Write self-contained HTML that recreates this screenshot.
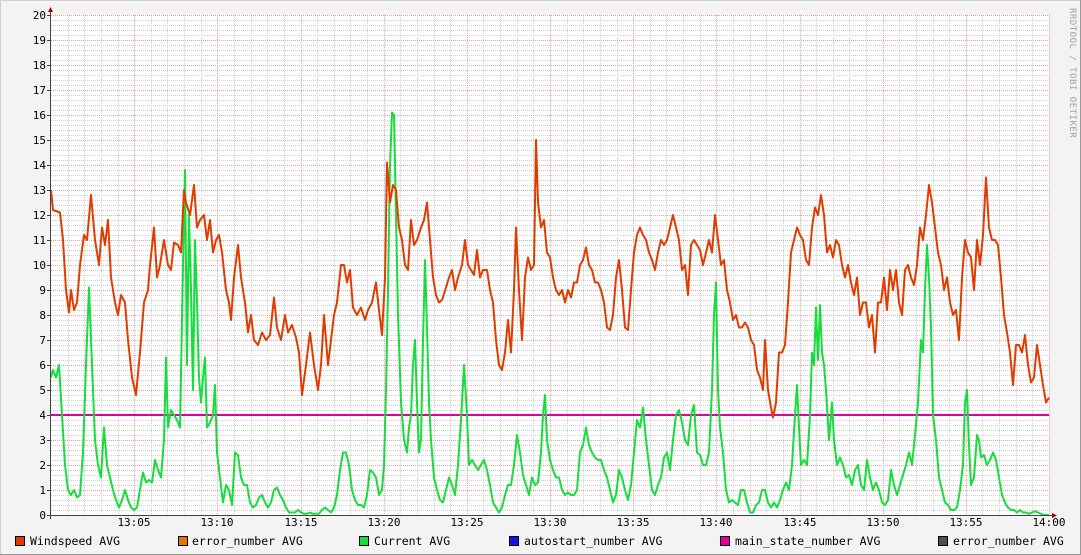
<!DOCTYPE html>
<html><head><meta charset="utf-8"><style>
html,body{margin:0;padding:0;background:#f3f3f3;}
svg{display:block;}
</style></head><body>
<svg id="g" width="1081" height="555" xmlns="http://www.w3.org/2000/svg" font-family="'DejaVu Sans Mono','Liberation Mono',monospace">
<rect x="0" y="0" width="1081" height="555" fill="#f3f3f3"/>
<rect x="0.5" y="0.5" width="1080" height="554" fill="none" stroke="#cfcfcf"/>
<line x1="0" y1="554.5" x2="1081" y2="554.5" stroke="#9a9a9a"/>
<line x1="1080.5" y1="0" x2="1080.5" y2="555" stroke="#9a9a9a"/>
<rect x="51" y="15" width="998" height="500" fill="#ffffff"/>
<g id="grid"></g>
<g id="lab" font-size="11" fill="#000"></g>
<line x1="51" y1="415" x2="1049" y2="415" stroke="#e000a0" stroke-width="2"/>
<polyline id="cur" fill="none" stroke="#16dd3c" stroke-width="2" stroke-linejoin="round"/>
<polyline id="wind" fill="none" stroke="#e03c00" stroke-width="2" stroke-linejoin="round"/>
<line x1="50.5" y1="8" x2="50.5" y2="519" stroke="#404040"/>
<line x1="47" y1="515.5" x2="1055" y2="515.5" stroke="#404040"/>
<polygon points="48,12 53,12 50.5,7" fill="#a00000"/>
<polygon points="1052,513 1052,518 1057,515.5" fill="#a00000"/>
<text x="1070" y="8" font-size="9" fill="#a0a0a0" transform="rotate(90 1070 8)" letter-spacing="0.5">RRDTOOL / TOBI OETIKER</text>
<g font-size="11.5" fill="#000">
<rect x="15.5" y="536.5" width="9" height="9" fill="#e03c00" stroke="#000"/><text x="30" y="545">Windspeed AVG</text>
<rect x="178.5" y="536.5" width="9" height="9" fill="#e07800" stroke="#000"/><text x="192" y="545">error_number AVG</text>
<rect x="359.5" y="536.5" width="9" height="9" fill="#16dd3c" stroke="#000"/><text x="374" y="545">Current AVG</text>
<rect x="509.5" y="536.5" width="9" height="9" fill="#2010e0" stroke="#000"/><text x="524" y="545">autostart_number AVG</text>
<rect x="720.5" y="536.5" width="9" height="9" fill="#e000a0" stroke="#000"/><text x="735" y="545">main_state_number AVG</text>
<rect x="938.5" y="536.5" width="9" height="9" fill="#505050" stroke="#000"/><text x="953" y="545">error_number AVG</text>
</g>
</svg>
<script>
var NS="http://www.w3.org/2000/svg";
function el(t,a,p){var e=document.createElementNS(NS,t);for(var k in a)e.setAttribute(k,a[k]);p.appendChild(e);return e;}
var grid=document.getElementById('grid'),lab=document.getElementById('lab');
for(var i=0;i<=100;i++){var y=515-i*5;if(i%5)el('line',{x1:51,x2:1049,y1:y+.5,y2:y+.5,stroke:'#d0d0d0','stroke-dasharray':'1,1'},grid);}
for(var m=0;m<=60;m++){var x=Math.round(51+m*16.633);if(m%5)el('line',{x1:x+.5,x2:x+.5,y1:15,y2:515,stroke:'#d0d0d0','stroke-dasharray':'1,1'},grid);}
for(var v=0;v<=20;v++){var y=515-v*25;el('line',{x1:51,x2:1049,y1:y+.5,y2:y+.5,stroke:'#f0a0a0','stroke-dasharray':'1,1'},grid);
 el('line',{x1:47,x2:51,y1:y+.5,y2:y+.5,stroke:'#404040'},grid);
 var t=el('text',{x:46,y:y+4,'text-anchor':'end'},lab);t.textContent=v;}
var names=["13:05","13:10","13:15","13:20","13:25","13:30","13:35","13:40","13:45","13:50","13:55","14:00"];
for(var k=1;k<=12;k++){var x=Math.round(51+k*83.17);el('line',{x1:x+.5,x2:x+.5,y1:15,y2:515,stroke:'#f0a0a0','stroke-dasharray':'1,1'},grid);
 var t=el('text',{x:x,y:526,'text-anchor':'middle'},lab);t.textContent=names[k-1];}
var W=[51,13,53,12.2,60,12.1,63,11,66,9,69,8.1,71,9,74,8.2,77,8.5,80,10,84,11.2,87,11,91,12.8,95,11,99,10,102,11.5,105,10.8,108,11.8,111,9.5,115,8.5,118,8,121,8.8,125,8.5,128,7,132,5.5,136,4.8,140,6.5,144,8.5,148,9,150,10,154,11.5,157,9.5,160,10,164,11,168,10,171,9.8,174,10.9,178,10.8,181,10.5,184,13,186,12.5,190,12,194,13.2,197,11.5,200,11.8,204,12,207,11,210,11.8,213,10.5,216,11,219,11.2,222,10.5,226,9,229,8.5,231,7.8,234,9.5,238,10.8,241,9.5,245,8.5,248,7.3,251,8,254,7,258,6.8,262,7.3,266,7,270,7.2,274,8.7,277,7.5,281,7,285,8,288,7.3,292,7.6,296,7.1,299,6.5,302,4.8,306,6,310,7.3,314,6,318,5,321,6,324,8,328,6,331,7,334,8,337,8.5,341,10,344,10,347,9.3,350,9.8,353,8.3,357,8,361,8.3,365,7.8,368,8.2,372,8.5,376,9.3,379,8.2,382,7.2,385,9.5,387,14.1,390,12.5,393,13.2,396,13,399,11.5,402,11,405,10,408,9.8,411,11.8,414,10.8,417,11,421,11.5,424,11.8,427,12.5,430,11,433,9.5,436,8.8,439,8.5,442,8.6,446,9.1,449,9.5,452,9.8,455,9,458,9.5,462,10,465,11,468,10,471,9.8,474,9.6,477,10.6,480,9.5,483,9.8,487,9.8,490,9,493,8.5,496,7,499,6,502,5.8,505,6.5,508,7.8,511,6.5,514,9,516,11.5,519,9,522,7,525,9.5,528,10.3,531,9.8,534,10,536,15,538,12.5,541,11.5,544,11.8,547,10.5,550,10.3,553,9.5,556,9,559,8.8,562,9,565,8.5,568,9,571,8.7,574,9.3,577,9.3,580,10,583,10.2,586,10.7,589,10,592,9.8,595,9.3,598,9.3,601,9,604,8.5,607,7.5,610,7.4,613,8,616,9.5,619,10.2,622,9,625,7.5,628,7.4,631,9,634,10.5,637,11.2,640,11.5,643,11.2,646,11,649,10.5,652,10.2,655,9.8,658,10.5,661,11,664,10.8,667,11,670,11.5,673,12,676,11.5,679,11,682,9.8,685,10,688,8.8,691,10.8,694,11,697,10.8,700,10.6,703,10,706,10.5,709,11,712,10.5,715,12,718,11,721,10,724,10.2,727,9,730,8.5,733,7.8,736,8,739,7.5,742,7.5,745,7.7,748,7.5,751,7,754,6.8,757,5.8,760,5.5,763,5,765,7,768,5,771,4.3,773,3.9,776,4.5,779,6.5,782,6.5,785,6.8,788,8.5,791,10.5,794,11,797,11.5,800,11.2,803,11,806,10.2,809,10,812,11.5,815,12.3,818,12,821,12.8,824,12,827,10.5,830,10.8,833,10.3,836,11,839,10.8,842,10,845,9.5,848,10,851,9.3,854,8.8,857,9.5,860,8,863,8.5,866,8.5,869,7.5,872,8,875,6.5,878,8.5,881,8.5,884,9.5,887,8.2,890,9.8,893,9,896,9.8,899,8.5,902,8,905,9.8,908,10,911,9.5,914,9.2,917,10,920,11.5,923,11,926,12,929,13.2,932,12.5,935,11.5,938,10.5,941,10,944,9,947,9.5,950,8.5,953,8,956,8.2,959,7,962,9.5,965,11,968,10.5,971,10.3,974,9,977,11,980,10,983,11.2,986,13.5,989,11.5,992,11,995,11,998,10.8,1001,9.5,1004,8,1007,7.3,1010,6.5,1013,5.2,1016,6.8,1019,6.8,1022,6.5,1025,7.2,1028,6,1031,5.3,1034,5.5,1037,6.8,1040,6,1043,5.2,1046,4.5,1049,4.7];
var C=[51,5.5,53,5.8,56,5.5,59,6,62,4,65,2,68,1,71,0.8,74,1,77,0.7,80,0.8,83,2.5,86,6,89,9.1,92,6,95,3,98,2,101,1.5,104,3.5,107,2,110,1.5,113,1,116,0.6,119,0.3,122,0.6,125,1,128,0.6,131,0.3,134,0.2,137,0.3,140,1,143,1.7,146,1.3,149,1.4,152,1.3,155,2.2,158,1.8,161,1.5,164,3,166,6.3,168,3.5,171,4.2,174,4,177,3.8,180,3.5,183,10,185,13.8,187,6,189,12,191,9,193,5,195,11,197,8.5,199,5.5,201,4.5,203,5.5,205,6.3,207,3.5,210,3.7,213,4,215,5.2,217,2.5,220,1.5,223,0.5,226,1.2,229,1,232,0.4,235,2.5,238,2.4,241,1.5,244,1.2,247,1.2,250,0.5,253,0.3,256,0.4,259,0.7,262,0.8,265,0.5,268,0.3,271,0.5,274,1,277,1.1,280,0.8,283,0.6,286,0.3,289,0.1,292,0.1,295,0.1,298,0.2,301,0.1,304,0.05,307,0.05,310,0.1,313,0.05,316,0.05,319,0.05,322,0.2,325,0.3,328,0.2,331,0.1,334,0.3,337,0.8,340,1.8,343,2.5,346,2.5,349,2,352,1,355,0.6,358,0.4,361,0.4,364,0.3,367,0.8,370,1.8,373,1.7,376,1.5,379,0.8,382,1,384,2,386,5,388,9,390,14,392,16.1,394,16,396,12,398,8,401,4.5,404,3,407,2.5,409,3.5,411,4,413,6,415,7,417,4.5,419,2.5,421,3,423,7,425,10.2,427,7.5,429,4.5,431,3,434,1.5,437,1,440,0.6,443,0.5,446,1,449,1.5,452,1.2,455,0.8,458,2,461,3.8,464,6,467,4,469,2,472,2.2,475,2,478,1.8,481,2,484,2.2,487,1.8,490,1.2,493,0.5,496,0.3,499,0.1,502,0.3,505,0.8,508,1.2,511,1.2,514,2,517,3.2,520,2.5,523,1.6,526,1.2,529,0.8,532,1.5,535,1.2,538,1.3,541,2.5,543,4,545,4.8,547,3,550,2.2,553,1.8,556,1.5,559,1.5,562,1,565,0.8,568,0.9,571,0.8,574,0.8,577,1,580,2.5,583,2.8,586,3.5,589,2.8,592,2.5,595,2.3,598,2.2,601,2.2,604,1.8,607,1.5,610,1,613,0.5,616,0.8,619,1.8,622,1.5,625,1,628,0.6,631,1.2,634,2.5,637,3.8,640,3.5,643,4.3,646,3,649,2,652,1,655,0.8,658,1.2,661,1.5,664,2.3,667,2.5,670,1.8,673,3,676,4,679,4.2,682,3.7,685,3,688,2.8,691,4,694,4.4,697,2.5,700,2.4,703,2,706,2,709,2.5,712,5,714,8,716,9.3,718,5,720,3.5,723,2.5,726,1,729,0.5,732,0.6,735,0.5,738,0.4,741,1,744,1,747,0.5,750,0.1,753,0.1,756,0.4,759,0.5,762,1,765,1,768,0.5,771,0.3,774,0.5,777,0.3,780,0.6,783,1,786,1.3,789,1,792,2,795,4,797,5.2,799,3.5,801,2,804,2.2,807,2,810,4,812,6.5,814,6,816,8.3,818,6.2,820,8.4,822,6.5,824,6,826,5,829,3,832,4.5,834,3,837,2,840,2.3,843,2,846,1.5,849,1.6,852,1.2,855,1.8,858,2,861,1.2,864,1,867,2.2,870,1.5,873,1,876,1.3,879,1,882,0.5,885,0.4,888,0.6,891,1.8,894,1.2,897,0.8,900,1.2,903,1.6,906,2,909,2.5,912,2,915,3.2,918,4.5,921,7,923,6.5,925,9,927,10.8,929,9.5,931,7.5,933,4,936,3,939,1.5,942,1,945,0.5,948,0.4,951,0.2,954,0.2,957,0.3,960,1,963,2,965,4.5,967,5,969,2.8,971,1.2,974,1.5,977,3.2,979,3,981,2.3,984,2.4,987,2,990,2.2,993,2.5,996,2.2,999,1.5,1002,0.8,1005,0.5,1008,0.3,1011,0.2,1014,0.2,1017,0.1,1020,0.2,1023,0.1,1026,0.1,1029,0.05,1032,0.1,1035,0.15,1038,0.1,1041,0.05,1044,0,1049,0];
function pts(a){var s=[];for(var i=0;i<a.length;i+=2)s.push(a[i]+","+(515-25*a[i+1]).toFixed(1));return s.join(" ");}
document.getElementById('wind').setAttribute('points',pts(W));
document.getElementById('cur').setAttribute('points',pts(C));
</script>
</body></html>
